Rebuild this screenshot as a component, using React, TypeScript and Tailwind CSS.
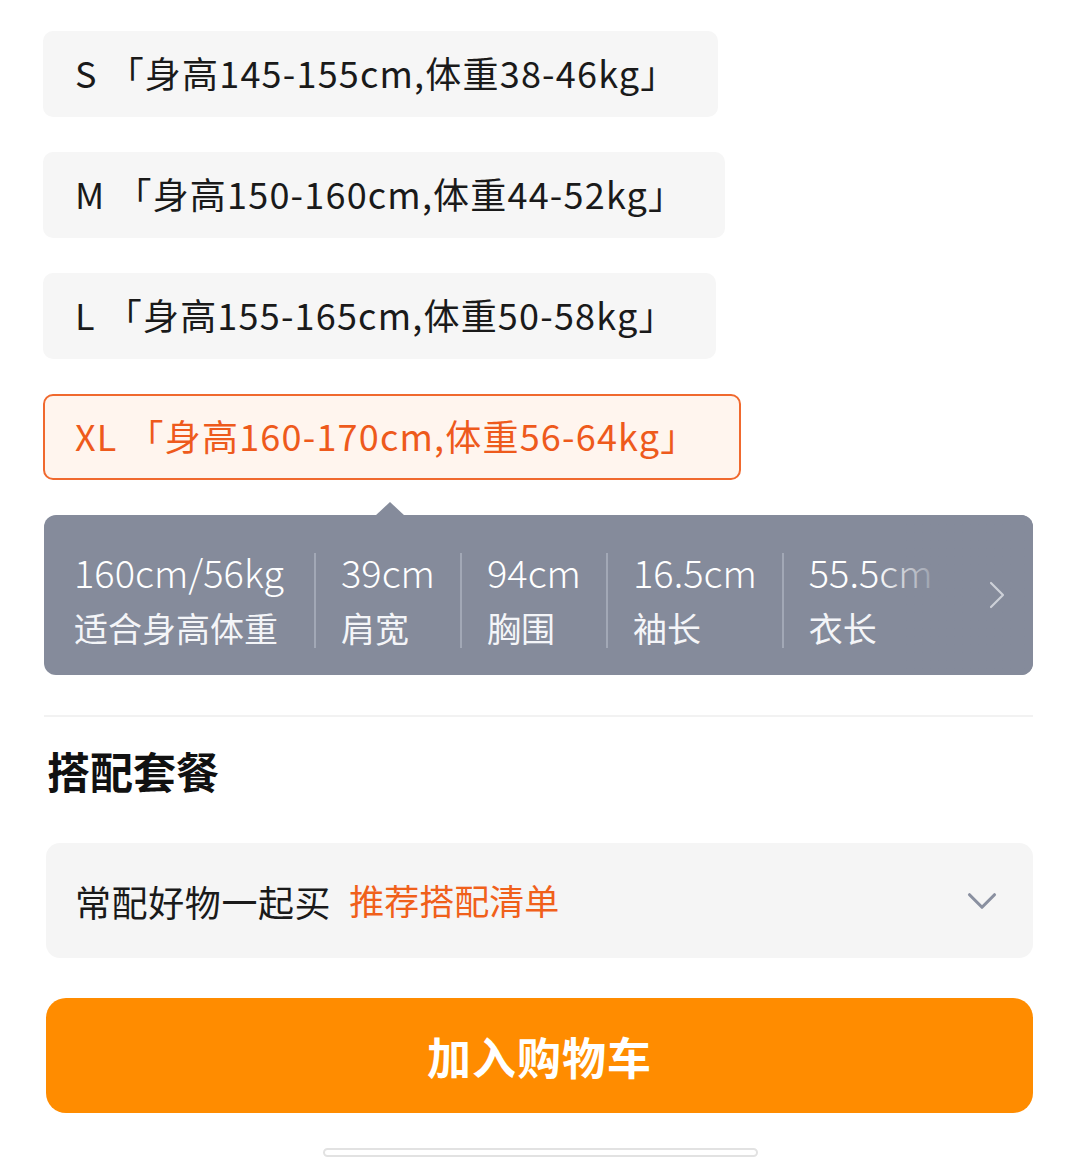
import { ChevronDown, ChevronRight } from "lucide-react";

const sizes = [
  { code: "S", range: "「身高145-155cm,体重38-46kg」" },
  { code: "M", range: "「身高150-160cm,体重44-52kg」" },
  { code: "L", range: "「身高155-165cm,体重50-58kg」" },
  { code: "XL", range: "「身高160-170cm,体重56-64kg」" },
];

const measures = [
  { value: "160cm/56kg", label: "适合身高体重" },
  { value: "39cm", label: "肩宽" },
  { value: "94cm", label: "胸围" },
  { value: "16.5cm", label: "袖长" },
  { value: "55.5cm", label: "衣长" },
];

const selected = "XL";

export default function App() {
  return (
    <div className="w-[1080px] h-[1159px] overflow-hidden bg-white font-['Noto_Sans_CJK_SC',sans-serif] text-[#1a1a1a]">
      <div className="ml-[44px] w-[989px] pt-[31px] flex flex-col">
        <div className="flex flex-col items-start gap-[35px] -ml-[1px]">
          {sizes.map((s) => {
            const active = s.code === selected;
            return (
              <div
                key={s.code}
                className={
                  active
                    ? "h-[86px] flex items-center pb-[4px] pl-[30px] pr-[42px] rounded-[10px] border-2 border-[#f0692e] bg-[#fff5ee] text-[#ee5a1c] text-[36px] tracking-[1.2px]"
                    : "h-[86px] flex items-center pb-[4px] pl-[32px] pr-[40px] rounded-[10px] bg-[#f6f6f6] text-[36px] tracking-[1.2px]"
                }
              >
                <span>{s.code}</span>
                <span className="ml-[10px]">{s.range}</span>
              </div>
            );
          })}
        </div>

        <div className="relative mt-[35px]">
          <div className="absolute -top-[13px] left-[331px] w-0 h-0 border-l-[15px] border-r-[15px] border-b-[14px] border-l-transparent border-r-transparent border-b-[#858b9b]" />
          <div className="relative h-[160px] rounded-[12px] bg-[#858b9b] flex items-center pt-[10px] overflow-hidden">
            {measures.map((m, i) => (
              <div key={m.value} className="flex items-center">
                {i > 0 && <div className="w-[2px] h-[95px] bg-[#a2a8b6]" />}
                <div className={i === 0 ? "pl-[30px] pr-[30px] flex flex-col" : "px-[25px] flex flex-col"}>
                  <span className="text-[38px] leading-[48px] font-light text-white whitespace-nowrap">{m.value}</span>
                  <span className="mt-[8px] text-[34px] leading-[48px] text-[#f4f5f8] whitespace-nowrap">{m.label}</span>
                </div>
              </div>
            ))}
            <div className="absolute top-0 bottom-0 right-0 w-[158px] bg-linear-to-r from-[#858b9b]/0 via-[#858b9b] via-45% to-[#858b9b]" />
            <ChevronRight className="absolute right-[12px] top-[56px] w-[48px] h-[48px] text-[#cdd0d8]" strokeWidth={1.1} />
          </div>
        </div>

        <div className="mt-[40px] h-[2px] bg-[#f2f2f2]" />

        <div className="mt-[29px] h-[48px] flex items-center ml-[3px] text-[43px] font-bold text-[#111]">搭配套餐</div>

        <div className="mt-[49px] ml-[2px] h-[115px] rounded-[14px] bg-[#f5f5f5] flex items-center pl-[29px] pr-[26px]">
          <span className="text-[36px] tracking-[0.6px] text-[#1a1a1a]">常配好物一起买</span>
          <span className="ml-[18px] text-[35px] text-[#f0601a]">推荐搭配清单</span>
          <ChevronDown className="ml-auto w-[50px] h-[50px] text-[#8a90a0]" strokeWidth={1.5} />
        </div>

        <div className="mt-[40px] ml-[2px] h-[115px] rounded-[20px] bg-[#ff8c00] flex items-center justify-center">
          <span className="text-[44px] font-bold text-white tracking-[1px]">加入购物车</span>
        </div>
      </div>

      <div className="mt-[35px] mx-auto w-[435px] h-[9px] rounded-full border-2 border-[#e2e2e2] bg-white" />
    </div>
  );
}
